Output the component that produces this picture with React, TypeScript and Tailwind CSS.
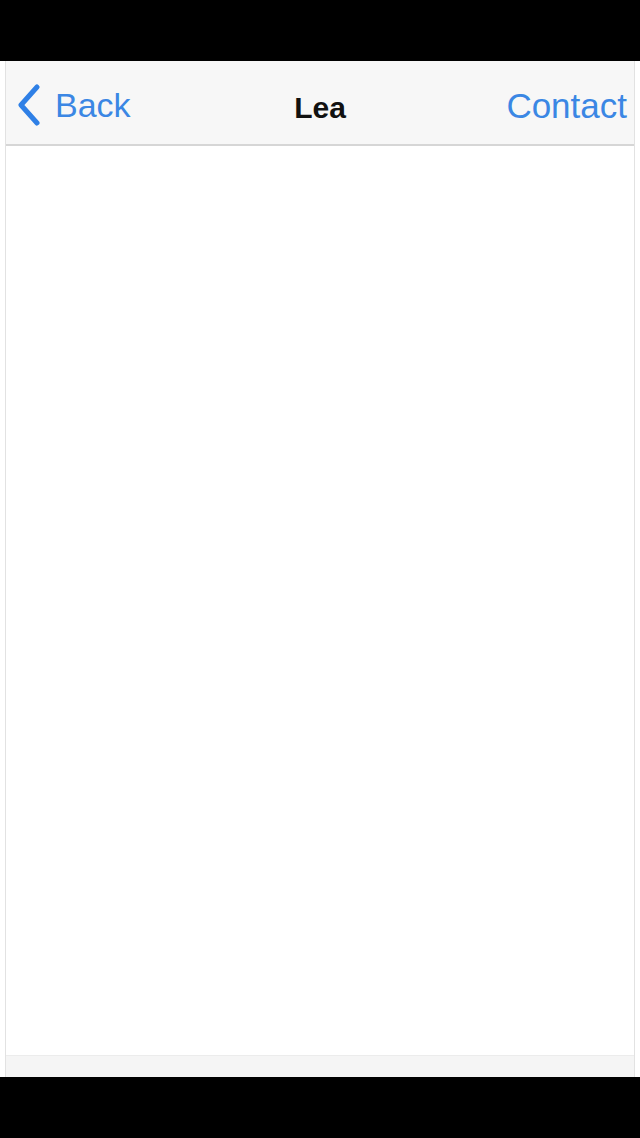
export default function App() {
  return (
    <div className="flex h-[1138px] w-[640px] flex-col bg-black font-['Liberation_Sans',Arial,sans-serif]">
      {/* top letterbox */}
      <div className="h-[61px] shrink-0 bg-black" />

      <div className="flex flex-1 flex-col bg-white px-[5px]">
        <div className="flex flex-1 flex-col border-x border-[#e2e2e2]">
          {/* Nav bar */}
          <header className="relative flex h-[85px] shrink-0 items-center justify-between border-b-2 border-[#d6d6d6] bg-[#f7f7f7] pl-[10px] pr-[7px] pt-[5px]">
            <button className="flex items-center gap-[13px] text-[#3b87e4]">
              <svg width="26" height="42" viewBox="0 0 26 42" fill="none">
                <path
                  d="M21 3 L5 21 L21 39"
                  stroke="#2f80e6"
                  strokeWidth="5"
                  strokeLinecap="round"
                  strokeLinejoin="round"
                />
              </svg>
              <span className="text-[34px] leading-none">Back</span>
            </button>
            <h1 className="absolute left-1/2 -translate-x-1/2 pt-[5px] text-[30px] font-bold leading-none text-[#111]">Lea</h1>
            <button className="text-[35px] leading-none text-[#3b87e4]">Contact</button>
          </header>

          {/* Content */}
          <main className="flex-1 bg-white" />

          {/* Bottom toolbar edge */}
          <footer className="h-[22px] shrink-0 border-t border-[#ececec] bg-[#f5f5f5]" />
        </div>
      </div>

      {/* bottom letterbox */}
      <div className="h-[61px] shrink-0 bg-black" />
    </div>
  );
}
